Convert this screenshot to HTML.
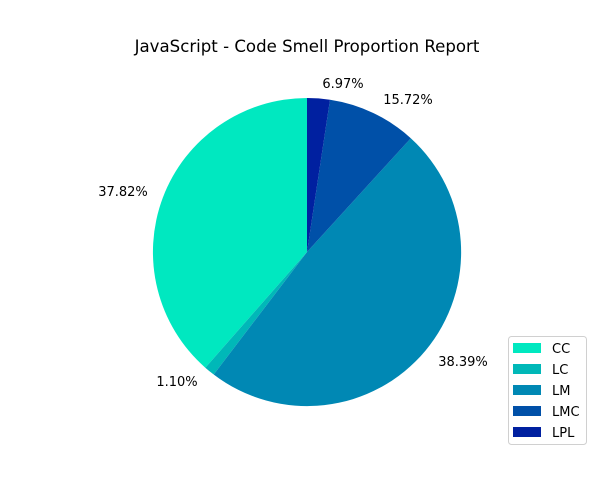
<!DOCTYPE html>
<html><head><meta charset="utf-8"><style>
html,body{margin:0;padding:0;background:#fff;}
svg{display:block;font-family:"DejaVu Sans","Liberation Sans",sans-serif;}
</style></head><body>
<svg width="600" height="500" viewBox="0 0 600 500" xmlns="http://www.w3.org/2000/svg">
<rect width="600" height="500" fill="#fff"/>
<text x="307" y="52" font-size="16.6" text-anchor="middle" fill="#000">JavaScript - Code Smell Proportion Report</text>
<g>
<path d="M307,252 L307,98 A154,154 0 0 0 205.3,367.7 Z" fill="#00e8c0"/>
<path d="M307,252 L205.3,367.7 A154,154 0 0 0 213.7,374.5 Z" fill="#00b8b8"/>
<path d="M307,252 L213.7,374.5 A154,154 0 0 0 410.8,138.2 Z" fill="#0088b4"/>
<path d="M307,252 L410.8,138.2 A154,154 0 0 0 330,99.7 Z" fill="#0050a8"/>
<path d="M307,252 L330,99.7 A154,154 0 0 0 307,98 Z" fill="#0020a0"/>
</g>
<g font-size="13" fill="#000">
<text x="343" y="88" text-anchor="middle">6.97%</text>
<text x="408" y="104" text-anchor="middle">15.72%</text>
<text x="123" y="196" text-anchor="middle">37.82%</text>
<text x="177" y="386" text-anchor="middle">1.10%</text>
<text x="463" y="366" text-anchor="middle">38.39%</text>
</g>
<rect x="508.5" y="336.5" width="78" height="108" rx="3" fill="#fff" stroke="#d0d0d0"/>
<g font-size="13" fill="#000">
<rect x="513" y="343" width="28" height="10" fill="#00e8c0"/><text x="552" y="353">CC</text>
<rect x="513" y="364" width="28" height="10" fill="#00b8b8"/><text x="552" y="374">LC</text>
<rect x="513" y="385" width="28" height="10" fill="#0088b4"/><text x="552" y="395">LM</text>
<rect x="513" y="406" width="28" height="10" fill="#0050a8"/><text x="552" y="416">LMC</text>
<rect x="513" y="427" width="28" height="10" fill="#0020a0"/><text x="552" y="437">LPL</text>
</g>
</svg>
</body></html>
